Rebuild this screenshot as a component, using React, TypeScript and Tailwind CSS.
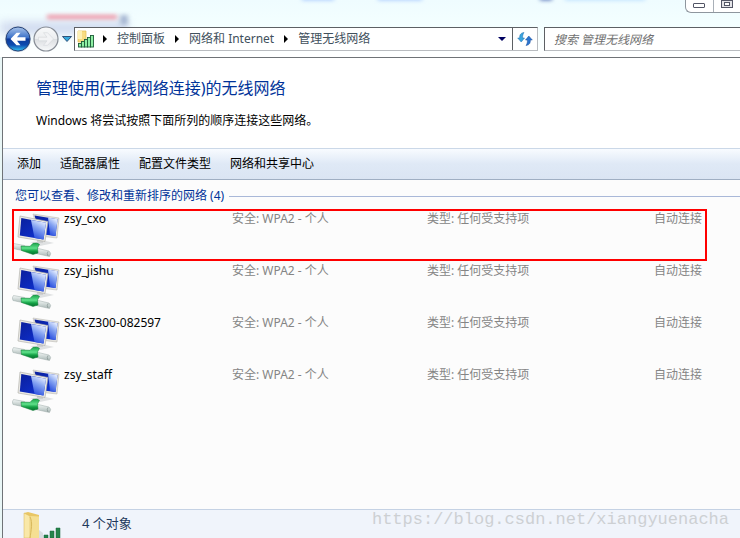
import React from 'react';

const networks = [
  { name: 'zsy_cxo', highlighted: true },
  { name: 'zsy_jishu', highlighted: false },
  { name: 'SSK-Z300-082597', highlighted: false },
  { name: 'zsy_staff', highlighted: false },
];

const commands = ['添加', '适配器属性', '配置文件类型', '网络和共享中心'];

const crumbs = ['控制面板', '网络和 Internet', '管理无线网络'];

function BackIcon() {
  return (
    <svg viewBox="0 0 28 28" className="h-7 w-7">
      <defs>
        <linearGradient id="back" x1="0" y1="0" x2="0" y2="1">
          <stop offset="0" stopColor="#a9c4ea" />
          <stop offset="0.45" stopColor="#3a70c8" />
          <stop offset="0.5" stopColor="#0c3a9a" />
          <stop offset="0.75" stopColor="#0d4cb0" />
          <stop offset="1" stopColor="#35c8f5" />
        </linearGradient>
      </defs>
      <circle cx="14" cy="14" r="13" fill="#c3ccd8" />
      <circle cx="14" cy="14" r="12" fill="url(#back)" stroke="#27457c" />
      <path d="M6.500 14l6-6.300h4L13 12.200h8.500v3.600H13l3.500 4.500h-4z" fill="#fff" />
    </svg>
  );
}

function ForwardIcon() {
  return (
    <svg viewBox="0 0 28 28" className="h-7 w-7">
      <defs>
        <linearGradient id="forward" x1="0" y1="0" x2="0" y2="1">
          <stop offset="0" stopColor="#f8f9fa" />
          <stop offset="0.48" stopColor="#eceef0" />
          <stop offset="0.52" stopColor="#dcdfe2" />
          <stop offset="1" stopColor="#f8fafb" />
        </linearGradient>
      </defs>
      <circle cx="14" cy="14" r="12" fill="url(#forward)" stroke="#868c95" strokeWidth="1.200" />
      <path d="M21.500 14l-6 6.300h-4l3.500-4.500H6.500v-3.600H15l-3.500-4.500h4z" fill="#f2f3f5" stroke="#d3d6da" strokeWidth="0.600" />
    </svg>
  );
}

function FolderSignalIcon() {
  return (
    <svg viewBox="0 0 18 18" className="h-[18px] w-[18px]">
      <path d="M1 1h8v11H1z" fill="#f7dc82" stroke="#e3bd52" strokeWidth="0.700" />
      <path d="M1 1h4v8H1z" fill="#fdf0b4" />
      {[
        [1, 13, 4],
        [4, 11, 6],
        [7, 9, 8],
        [10, 7, 10],
        [13, 5, 12],
      ].map(([x, y, h]) => (
        <rect key={x} x={x + 0.5} y={y + 0.5} width="3" height={h - 0.5} fill="#8ff0a4" stroke="#1d5c38" strokeWidth="0.900" />
      ))}
    </svg>
  );
}

function RefreshIcon() {
  return (
    <svg viewBox="0 0 16 16" className="h-4 w-4">
      <path d="M7 1.500C3.500 2 2.500 4 2.700 7H.700L4.200 11 7.500 7H5.600C5.500 4.500 6 3 7 1.500z" fill="#3aa5de" stroke="#1f6cae" strokeWidth="0.500" />
      <path d="M9 14.500c3.500-.5 4.500-2.500 4.300-5.500h2L11.800 5 8.500 9h1.900c.1 2.500-.4 4-1.400 5.500z" fill="#2b74cf" stroke="#1b4f9c" strokeWidth="0.500" />
    </svg>
  );
}

function NetworkIcon() {
  return (
    <svg viewBox="0 0 48 48" className="block h-12 w-12">
      <defs>
        <linearGradient id="screen" x1="0" y1="0" x2="1" y2="1">
          <stop offset="0" stopColor="#0a1f9c" />
          <stop offset="1" stopColor="#1034d8" />
        </linearGradient>
        <linearGradient id="glare" x1="0.200" y1="1" x2="0.600" y2="0">
          <stop offset="0" stopColor="#1f45dc" />
          <stop offset="0.600" stopColor="#86a4f2" />
          <stop offset="1" stopColor="#e4edff" />
        </linearGradient>
        <linearGradient id="cable" x1="0" y1="0" x2="0" y2="1">
          <stop offset="0" stopColor="#f4f8f7" />
          <stop offset="1" stopColor="#aab8b6" />
        </linearGradient>
        <linearGradient id="plug" x1="0" y1="0" x2="0" y2="1">
          <stop offset="0" stopColor="#19a34a" />
          <stop offset="0.450" stopColor="#5fe08a" />
          <stop offset="0.700" stopColor="#12a044" />
          <stop offset="1" stopColor="#087030" />
        </linearGradient>
      </defs>
      <path d="M18 33l16-1 8 2-14 3z" fill="#dfe1e2" />
      <path d="M25 30h6v4h-6z" fill="#cfd1d2" />
      <path d="M21 5L47 9l-2 20-18-2z" fill="#e4e3de" stroke="#b2b1aa" strokeWidth="0.500" />
      <path d="M22.500 6.500L45.500 10.200 43.500 27 28 25z" fill="url(#screen)" />
      <path d="M36 8.600l9.500 1.600L43.500 27 38 26z" fill="url(#glare)" />
      <path d="M8 7l28 5.500-3 20L6 28z" fill="#ebeae5" stroke="#aaa9a3" strokeWidth="0.600" />
      <path d="M9.300 9L34 13.800 31.500 30.500 7.800 26.500z" fill="url(#screen)" />
      <path d="M19 10.900l15 2.900L31.500 30.500l-9-1.500z" fill="url(#glare)" />
      <path d="M1.500 34.500l11 2v5.500L1 39.500q-1.500-3 .5-5z" fill="url(#cable)" stroke="#9daaa8" strokeWidth="0.500" />
      <path d="M24 39l13 3q3 2 .5 5.500L24 44.500z" fill="url(#cable)" stroke="#9daaa8" strokeWidth="0.500" />
      <path d="M36 42.500q-1.500 2 0 4.500" fill="none" stroke="#8b9997" strokeWidth="0.800" />
      <path d="M9 37l9 .3 3-3q4-1 6.500 1l-2 3.700.5 5-5 1.500L9.500 41.500z" fill="url(#plug)" stroke="#0e7d35" strokeWidth="0.500" />
    </svg>
  );
}

function FolderLargeIcon() {
  return (
    <svg viewBox="0 0 44 26" className="h-[26px] w-11">
      <path d="M5 1l4-1 11 3v23H8z" fill="#e9c665" />
      <path d="M11 4l9 0.500V26h-9z" fill="#f5df92" />
      <path d="M5 1l6 3v22H5z" fill="#f9e8a8" stroke="#d8b456" strokeWidth="0.500" />
      <path d="M11 5c3 5 1 14 0 21" fill="none" stroke="#d9b95c" />
      <path d="M20 18l4 3v5h-4z" fill="#d8dde0" />
      <path d="M25 23h4v3h-4zM31 19h4v7h-4zM37 16h4v10h-4z" fill="#23844a" stroke="#1b6639" strokeWidth="0.500" />
    </svg>
  );
}

export default function App() {
  return (
    <div className="flex min-h-screen flex-col overflow-hidden bg-[#e9f6f6] font-['Noto_Sans','Noto_Sans_CJK_SC',sans-serif] text-xs leading-4 text-black">
      {/* Title strip, with the page behind showing through the glass */}
      <header className="relative isolate bg-linear-to-b from-[#effcff] via-[#f4ffff] to-white">
        <div className="absolute inset-0 -z-10 overflow-hidden">
          <div className="absolute left-0 top-[22px] h-3 w-32 bg-[#cfd9ef] blur-[5px]" />
          <div className="absolute left-[120px] top-[15px] h-[10px] w-2 bg-[#a9b9d3] blur-[2px]" />
          <div className="absolute left-[47px] top-[15px] h-1 w-[70px] bg-[#ee8fa0] blur-[2px]" />
          <div className="absolute -top-1 left-[302px] h-1 w-8 bg-[#9fc4ff] blur-[2px]" />
          <div className="absolute -top-1 left-[378px] h-1 w-11 bg-[#9fc4ff] blur-[2px]" />
          <div className="absolute -top-1 left-[540px] h-1 w-3 bg-[#3f5fae] blur-[2px]" />
          <div className="absolute -top-1 left-[565px] h-1 w-20 bg-[#b4dcff] blur-[2px]" />
        </div>
        <div className="flex h-[25px] items-start justify-end">
          <div className="flex h-[13px] w-[55px] rounded-bl-md border-b border-l border-[#8e969e] bg-white">
            <button aria-label="最小化" className="flex flex-1 justify-center border-r border-[#a9b0b8] pt-[3px]">
              <span className="h-[5px] w-3 rounded-[1px] border border-[#535666] bg-white" />
            </button>
            <button aria-label="最大化" className="flex flex-1 justify-center">
              <span className="flex h-2 w-3 items-center justify-center border border-[#535666] bg-[#e4e4e8]">
                <span className="h-1 w-[6px] border border-[#535666] bg-white" />
              </span>
            </button>
          </div>
        </div>

        {/* Navigation bar */}
        <div className="flex items-center pb-1 pl-1">
          <button aria-label="后退"><BackIcon /></button>
          <button aria-label="前进"><ForwardIcon /></button>
          <button aria-label="最近的页面" className="px-[2px]">
            <svg viewBox="0 0 10 6" className="h-[6px] w-[10px]">
              <path d="M.500.500h9L5 5.500z" fill="#35a8dc" stroke="#17345e" strokeWidth="0.800" />
            </svg>
          </button>
          <nav className="flex h-6 flex-1 items-center border border-[#b9bcc0] border-t-[#5d6064] border-l-[#5d6064] bg-white pl-[2px] text-[#41505c]">
            <FolderSignalIcon />
            {crumbs.map((crumb) => (
              <React.Fragment key={crumb}>
                <svg viewBox="0 0 4 8" className="ml-2 mr-[10px] h-2 w-1">
                  <path d="M0 0l4 4-4 4z" fill="#000" />
                </svg>
                <a href="#" className="mr-[2px]">{crumb}</a>
              </React.Fragment>
            ))}
            <button aria-label="以前的位置" className="ml-auto px-[6px]">
              <svg viewBox="0 0 8 4" className="h-1 w-2">
                <path d="M0 0h8L4 4z" fill="#000060" />
              </svg>
            </button>
            <button aria-label="刷新" className="flex h-full w-[25px] items-center justify-center border-l border-[#5d6064]">
              <RefreshIcon />
            </button>
          </nav>
          <input
            type="search"
            aria-label="搜索 管理无线网络"
            placeholder="搜索 管理无线网络"
            className="ml-[6px] h-6 w-[196px] border border-r-0 border-[#b9bcc0] border-t-[#5d6064] border-l-[#5d6064] bg-white pl-[9px] italic placeholder:text-[#707070]"
          />
        </div>
      </header>

      <main className="ml-[2px] flex flex-1 flex-col border-l border-t border-[#6f7377] bg-[#fcfcfc]">
        <section className="bg-white pb-[19px] pl-[33px] pt-[18px]">
          <h1 className="text-base leading-6 text-[#003399]">管理使用(无线网络连接)的无线网络</h1>
          <p className="mt-[13px]">Windows 将尝试按照下面所列的顺序连接这些网络。</p>
        </section>

        <div className="flex h-8 items-center gap-[19px] border-b border-t border-b-[#a0afc3] border-t-[#cbd8e8] bg-linear-to-b from-[#f8fbff] via-[#dfe9f6] to-[#dbe5f3] pl-[14px]">
          {commands.map((command) => (
            <button key={command}>{command}</button>
          ))}
        </div>

        {/* Network list */}
        <section className="flex-1">
          <div className="flex items-center gap-[5px] pb-[5px] pl-3 pt-2">
            <h2 className="text-[#003399]">您可以查看、修改和重新排序的网络 (4)</h2>
            <div className="h-px flex-1 bg-[#a9b8d8]" />
          </div>
          <div className="pl-[9px] pr-[33px]">
            <table className="w-full table-fixed border-collapse">
              <tbody>
                {networks.map((network) => (
                  <tr
                    key={network.name}
                    className={network.highlighted ? 'h-[52px] align-top outline-2 -outline-offset-2 outline-[#ff0000]' : 'h-[52px] align-top'}
                  >
                    <td className="w-[52px]"><NetworkIcon /></td>
                    <td className="w-[168px] pt-[2px]">{network.name}</td>
                    <td className="w-[195px] pt-[2px] text-[#858585]">安全: WPA2 - 个人</td>
                    <td className="pt-[2px] text-[#858585]">类型: 任何受支持项</td>
                    <td className="pr-[5px] pt-[2px] text-right text-[#858585]">自动连接</td>
                  </tr>
                ))}
              </tbody>
            </table>
          </div>
        </section>

        <footer className="flex h-[29px] items-end justify-between border-t border-[#c5d2e4] bg-[#f0f4fb] pl-4 pr-[11px]">
          <div className="flex items-end">
            <FolderLargeIcon />
            <span className="ml-[19px] pb-[5px] text-[13px] leading-5 text-[#1e395b]">4 个对象</span>
          </div>
          <span className="pb-2 font-['Liberation_Mono',monospace] text-[17px] leading-5 text-[#cdd0d3]">https://blog.csdn.net/xiangyuenacha</span>
        </footer>
      </main>
    </div>
  );
}
